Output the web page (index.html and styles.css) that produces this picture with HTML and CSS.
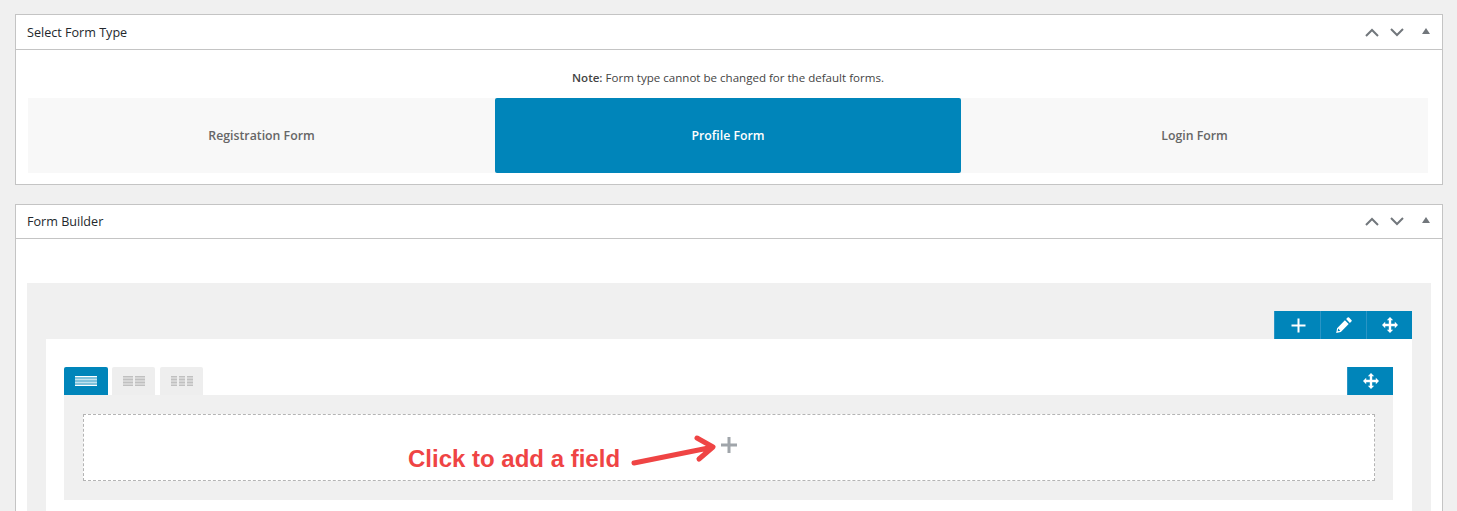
FILE: index.html
```html
<!DOCTYPE html>
<html lang="en">
<head>
  <meta charset="UTF-8">
  <meta name="viewport" content="width=device-width, initial-scale=1.0">
  <title>Form Builder</title>
  <link rel="stylesheet" href="styles.css">
</head>
<body>
  <section class="panel panel-type">
    <header class="panel-head">
      <h2>Select Form Type</h2>
      <div class="panel-actions">
        <svg class="act-chev" viewBox="0 0 14 9"><path d="M1 8l6-6 6 6"/></svg>
        <svg class="act-chev" viewBox="0 0 14 9"><path d="M1 1l6 6 6-6"/></svg>
        <svg class="act-tri" viewBox="0 0 8 6"><path d="M4 0l4 6H0z"/></svg>
      </div>
    </header>
    <div class="panel-body type-body">
      <p class="note"><strong>Note:</strong> Form type cannot be changed for the default forms.</p>
      <div class="type-tabs">
        <div class="type-tab">Registration Form</div>
        <div class="type-tab active">Profile Form</div>
        <div class="type-tab">Login Form</div>
      </div>
    </div>
  </section>

  <section class="panel panel-builder">
    <header class="panel-head">
      <h2>Form Builder</h2>
      <div class="panel-actions">
        <svg class="act-chev" viewBox="0 0 14 9"><path d="M1 8l6-6 6 6"/></svg>
        <svg class="act-chev" viewBox="0 0 14 9"><path d="M1 1l6 6 6-6"/></svg>
        <svg class="act-tri" viewBox="0 0 8 6"><path d="M4 0l4 6H0z"/></svg>
      </div>
    </header>
    <div class="panel-body builder-body">
      <div class="builder">
        <div class="tools">
          <button class="tool">
            <svg class="plus-icon" viewBox="0 0 15 15"><path d="M6.500 0.500h2v6h6v2h-6v6h-2v-6h-6v-2h6z" fill="#fff"/></svg>
          </button>
          <button class="tool">
            <svg width="16" height="16" viewBox="0 0 16 16"><path d="M11.600 0.600a1 1 0 0 1 1.400 0l2.400 2.400a1 1 0 0 1 0 1.400l-1.500 1.500-3.800-3.800zM8.900 3.300l3.800 3.800-7.900 7.900-4.600 1 .9-4.800zM2.200 11.600l-.5 2.700 2.600-.5z" fill="#fff" fill-rule="evenodd"/></svg>
          </button>
          <button class="tool">
            <svg class="move-icon" viewBox="0 0 16 16"><path d="M8 0l3.200 3.200H9.200V6.800h3.600V4.800L16 8l-3.200 3.200V9.200H9.200v3.600h2L8 16l-3.200-3.200h2V9.200H3.200v2L0 8l3.200-3.200v2h3.600V3.200h-2z" fill="#fff"/></svg>
          </button>
        </div>
        <div class="row-card">
          <div class="row-top">
            <div class="cols">
              <button class="col-tab active">
                <svg class="col-icon" viewBox="0 0 22 10"><rect width="22" height="10" fill="#7fc2dc"/><rect width="22" height="1" fill="#fff"/><rect y="3" width="22" height="1" fill="#bfe2f0"/><rect y="6" width="22" height="1" fill="#bfe2f0"/><rect y="9" width="22" height="1" fill="#fff"/></svg>
              </button>
              <button class="col-tab">
                <svg class="col-icon" viewBox="0 0 22 10"><path d="M0 1h10v2H0zM12 1h10v2H12zM0 4h10v2H0zM12 4h10v2H12zM0 7h10v2H0zM12 7h10v2H12z" fill="#d6d6d6"/><path d="M0 0h10v1H0zM12 0h10v1H12zM0 3h10v1H0zM12 3h10v1H12zM0 6h10v1H0zM12 6h10v1H12zM0 9h10v1H0zM12 9h10v1H12z" fill="#c0c0c0"/></svg>
              </button>
              <button class="col-tab">
                <svg class="col-icon" viewBox="0 0 22 10"><path d="M0 1h6v2H0zM8 1h6v2H8zM16 1h6v2h-6zM0 4h6v2H0zM8 4h6v2H8zM16 4h6v2h-6zM0 7h6v2H0zM8 7h6v2H8zM16 7h6v2h-6z" fill="#d6d6d6"/><path d="M0 0h6v1H0zM8 0h6v1H8zM16 0h6v1h-6zM0 3h6v1H0zM8 3h6v1H8zM16 3h6v1h-6zM0 6h6v1H0zM8 6h6v1H8zM16 6h6v1h-6zM0 9h6v1H0zM8 9h6v1H8zM16 9h6v1h-6z" fill="#c0c0c0"/></svg>
              </button>
            </div>
            <button class="tool">
              <svg class="move-icon" viewBox="0 0 16 16"><path d="M8 0l3.200 3.200H9.200V6.800h3.600V4.800L16 8l-3.200 3.200V9.200H9.200v3.600h2L8 16l-3.200-3.200h2V9.200H3.200v2L0 8l3.200-3.200v2h3.600V3.200h-2z" fill="#fff"/></svg>
            </button>
          </div>
          <div class="row-fields">
            <div class="drop-zone">
              <svg class="add-plus" viewBox="0 0 16 16"><path d="M6.500 0h3v6.500H16v3H9.500V16h-3V9.500H0v-3h6.500z"/></svg>
            </div>
          </div>
        </div>
      </div>
    </div>
  </section>

  <!-- annotation drawn on top of the screenshot -->
  <div class="hint">Click to add a field</div>
  <svg class="hint-arrow" viewBox="0 0 90 34"><path d="M4 29L81 13.500M67 4l16 9-14 12" /></svg>
</body>
</html>
```

FILE: styles.css
```css
* { margin: 0; padding: 0; box-sizing: border-box; }

html, body {
  height: 100%;
  overflow: hidden;
}

body {
  font-family: 'Open Sans', sans-serif;
  background: #f0f0f0;
  color: #23282d;
  padding: 14px 14px 0 15px;
  position: relative;
}

.panel {
  background: #fff;
  border: 1px solid #c4c4c4;
}

.panel-builder {
  margin-top: 19px;
  height: 307px;
  border-bottom: none;
}

.panel-head {
  display: flex;
  align-items: center;
  justify-content: space-between;
  height: 35px;
  padding: 0 11px;
  border-bottom: 1px solid #c4c4c4;
}

.panel-builder .panel-head {
  height: 34px;
}

.panel-head h2 {
  font-size: 12.6px;
  font-weight: 400;
}

.panel-actions {
  display: flex;
  align-items: center;
  padding-right: 1px;
}

.act-chev {
  width: 14px;
  height: 9px;
  margin-right: 11px;
}

.act-chev path {
  fill: none;
  stroke: #72777c;
  stroke-width: 2;
}

.act-tri {
  width: 8px;
  height: 6px;
  margin-left: 7px;
  margin-bottom: 3px;
  fill: #72777c;
}

.type-body {
  padding: 0 14px 11px 12px;
}

.note {
  height: 48px;
  padding-top: 20px;
  text-align: center;
  font-size: 11.55px;
  line-height: 16px;
  color: #444;
}

.note strong {
  font-weight: 600;
}

.type-tabs {
  display: grid;
  grid-template-columns: 467px 466px 467px;
  background: #f8f8f8;
}

.type-tab {
  height: 75px;
  line-height: 75px;
  text-align: center;
  font-size: 12.3px;
  font-weight: 600;
  color: #666;
}

.type-tab.active {
  background: #0085ba;
  color: #fff;
  border-radius: 2px;
}

.builder-body {
  padding: 44px 11px 0;
}

.builder {
  background: #f0f0f0;
  padding: 28px 19px 0;
  height: 228px;
}

.tools {
  display: flex;
  justify-content: flex-end;
}

.tool {
  display: flex;
  align-items: center;
  justify-content: center;
  width: 46px;
  height: 28px;
  background: #0085ba;
  border: none;
  border-left: 1px solid #2a95c5;
}

.plus-icon {
  width: 15px;
  height: 15px;
  margin-left: 1px;
}

.move-icon {
  width: 16px;
  height: 16px;
}

.row-card {
  background: #fff;
  padding: 28px 19px 0 18px;
  height: 172px;
}

.row-top {
  display: flex;
  justify-content: space-between;
}

.cols {
  display: flex;
  gap: 4px;
}

.col-tab {
  display: flex;
  align-items: center;
  justify-content: center;
  width: 43px;
  height: 28px;
  background: #eee;
  border: none;
  border-radius: 2px 2px 0 0;
}

.col-tab + .col-tab + .col-tab {
  margin-left: 1px;
}

.col-tab.active {
  width: 44px;
  background: #0085ba;
}

.col-icon {
  width: 22px;
  height: 10px;
}

.row-fields {
  background: #f0f0f0;
  padding: 19px 18px 19px 19px;
}

.drop-zone {
  display: flex;
  justify-content: center;
  height: 67px;
  padding-top: 22px;
  background: #fff;
  border: 1px dashed #b4b4b4;
}

.add-plus {
  width: 16px;
  height: 16px;
  fill: #a0a5aa;
}

.hint {
  position: absolute;
  left: 408px;
  top: 445px;
  font-family: 'Liberation Sans', sans-serif;
  font-size: 24px;
  line-height: 27px;
  font-weight: 700;
  color: #ef4444;
}

.hint-arrow {
  position: absolute;
  left: 630px;
  top: 434px;
  width: 90px;
  height: 34px;
}

.hint-arrow path {
  fill: none;
  stroke: #ef4444;
  stroke-width: 5;
  stroke-linecap: round;
  stroke-linejoin: round;
}
```
